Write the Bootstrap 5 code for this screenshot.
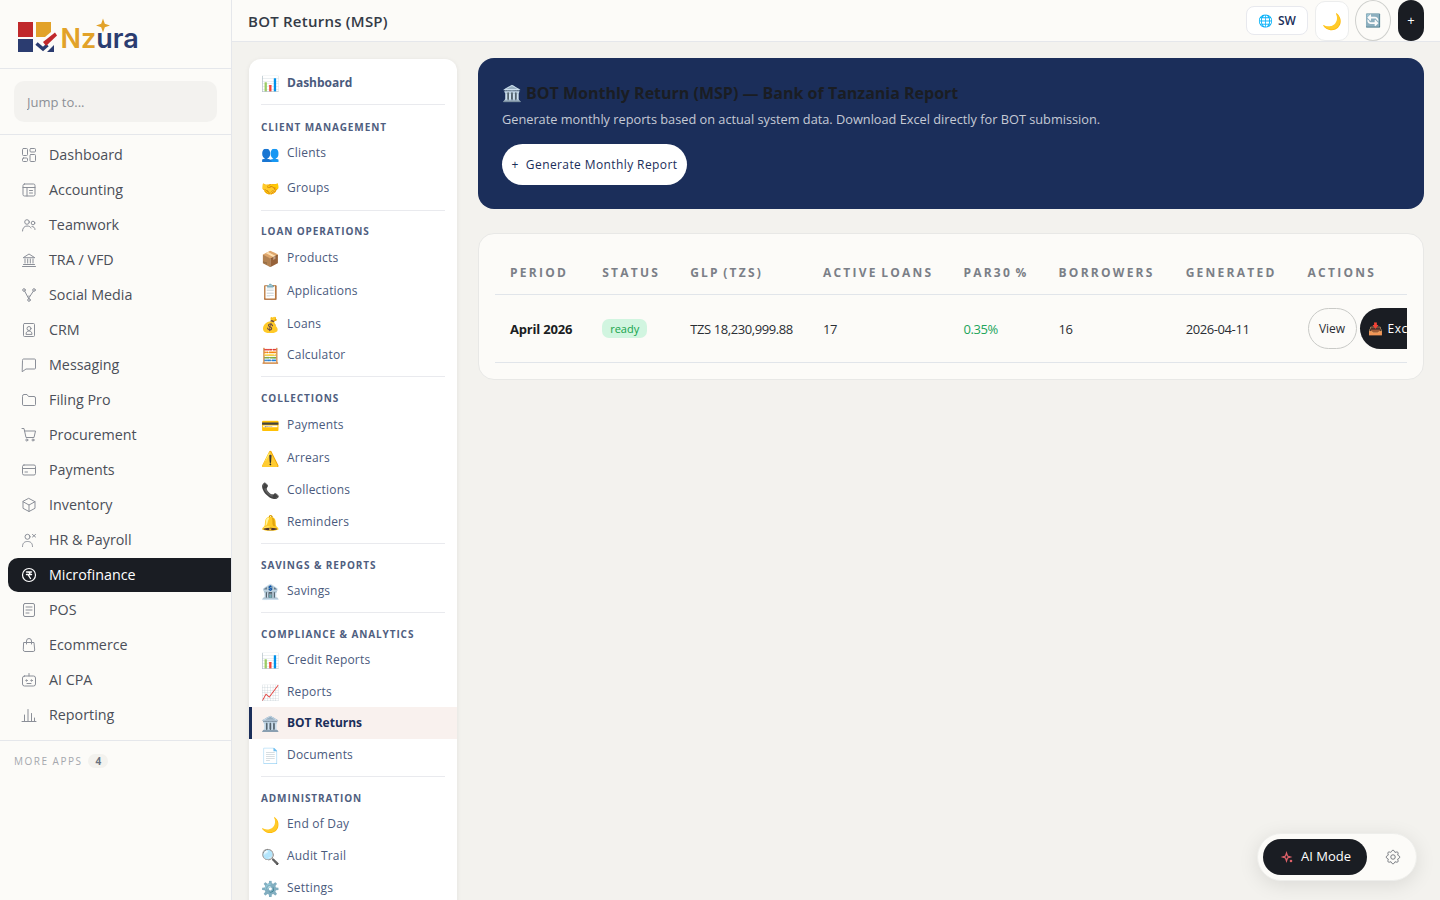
<!DOCTYPE html>
<html lang="en">
<head>
<meta charset="utf-8">
<title>BOT Returns (MSP)</title>
<link href="https://cdn.jsdelivr.net/npm/bootstrap@5.3.0/dist/css/bootstrap.min.css" rel="stylesheet">
<style>
html,body{height:100%;overflow:hidden}
body{font-family:"Open Sans","Noto Color Emoji",sans-serif;background:#f3f2ee;color:#1a1d23}
.side-pane{width:232px;height:900px;background:#fcfbf8;border-right:1px solid #e5e7eb;flex:none}
.logo-box{height:69px;border-bottom:1px solid #e5e7eb;padding:15px 0 0 17px}
.jump-box{height:66px;border-bottom:1px solid #e5e7eb;padding:12px 14px 12px 14px}
.jump-input{height:41px;width:203px;background:#f3f2ef;border:0;border-radius:10px;font-size:13px;padding:0 13px;color:#6b7280}
.jump-input::placeholder{color:#8b8f96}
.app-list{padding:3px 0 0 8px;display:flex;flex-direction:column;gap:1px}
.app-item{height:34px;display:flex;align-items:center;gap:12px;padding-left:13px;color:#4b4f58;font-size:14.3px;text-decoration:none;border-radius:10px 0 0 10px}
.app-item svg{width:16px;height:16px;flex:none;fill:none;stroke:#8b8f98;stroke-width:1;stroke-linecap:round;stroke-linejoin:round}
.app-on{background:#1a1d23;color:#fff}
.app-on svg{stroke:#fff}
.more-row{margin-top:8px;border-top:1px solid #e5e7eb;padding:13px 14px 0;display:flex;align-items:center;gap:6px;font-size:10px;letter-spacing:1.5px;color:#a5a8ae;line-height:14px}
.more-count{background:#f3f2ee;color:#6b7280;font-weight:700;border-radius:8px;width:20px;text-align:center;letter-spacing:0;font-size:10px}
.top-strip{height:42px;background:#fcfbf8;border-bottom:1px solid #e5e7eb;padding:0 16px}
.page-title{font-size:15px;font-weight:600;letter-spacing:.24px;color:#343a46;margin:0}
.lang-chip{width:62px;height:29px;border:1px solid #e8e9ee;border-radius:8px;background:#fff;font-size:12px;font-weight:600;color:#1b2e5a;padding:0;gap:5px;margin-right:7px}
.moon-chip{width:34px;height:40px;border:1px solid #eceded;border-radius:10px;background:#fff;font-size:16px;padding:0;margin-right:6px}
.sync-chip{width:36px;height:41px;border:1px solid #cfd0cd;border-radius:50%;background:transparent;font-size:13px;padding:0;margin-right:7px}
.plus-chip{width:26px;height:41px;border:0;border-radius:13px;background:#1a1d23;color:#fff;font-size:13px;padding:0}
.work-area{padding:16px 16px 0 17px;gap:21px}
.sub-pane{width:208px;flex:none;margin-top:1px;background:#fff;border-radius:12px;box-shadow:0 1px 5px rgba(0,0,0,.07);padding:8px 0;height:900px}
.sub-row{height:32px;display:flex;align-items:center;padding-left:12px;color:#4a5a7d;font-size:12px;letter-spacing:.2px;text-decoration:none}
.sub-row .emo{width:26px;flex:none;font-size:15px;line-height:1;letter-spacing:0}
.sub-head{font-weight:700;letter-spacing:0}
.sub-on{background:#f9f1ee;color:#1b2e5a;font-weight:700;letter-spacing:0;border-left:3px solid #1b2e5a;padding-left:9px}
.sub-rule{height:1px;background:#e9eaee;margin:5px 12px 0}
.rule-low{margin-top:6px}
.sub-label{padding:12.5px 12px 2.5px;font-size:10px;line-height:16px;font-weight:700;letter-spacing:.9px;color:#4f5e80}
.lab-down{padding-top:13.5px}
.lab-wide{padding-bottom:3.5px}
.lab-up{padding-top:11.5px;padding-bottom:3.5px}
.t1{margin-top:1px}.t3{margin-top:3px}.n1{margin-top:-1px}
.hero-band{background:#1b2e5a;border-radius:16px;padding:24px;height:151px}
.hero-title{font-size:16px;font-weight:700;line-height:23px;color:#1a1d23;margin:0 0 5px}
.hero-sub{font-size:12.75px;line-height:18px;color:rgba(255,255,255,.75);margin:0 0 16px}
.hero-btn{height:41px;width:185px;border-radius:21px;background:#fff;color:#1b2e5a;font-size:12px;font-weight:500;letter-spacing:.4px;padding:0;border:0}
.data-card{margin-top:24px;background:#fcfbf8;border:1px solid #e8e8e6;border-radius:16px;padding:16px;height:147px}
.data-clip{overflow:hidden;width:912px}
.data-grid{width:max-content;max-width:none;margin:0;--bs-table-bg:transparent;white-space:nowrap}
.data-grid th{font-size:12px;font-weight:700;letter-spacing:2.25px;word-spacing:-2px;color:#7b7f87;height:44px;padding:2px 15px 0;vertical-align:middle;border-bottom:1px solid #e1e5ea}
.data-grid th.th-wide{padding-right:16px}
.data-grid td{font-size:13px;letter-spacing:-.4px;color:#2b2e34;height:68px;padding:4px 15px 0;vertical-align:middle;border-bottom:1px solid #e1e5ea}
.data-grid td.period-cell{font-weight:700;color:#1a1d23;letter-spacing:-.2px}
.ready-pill{background:#d1f5e0;color:#16a34a;font-size:11px;font-weight:500;letter-spacing:0;padding:3px 8px;border-radius:7px;display:inline-block;line-height:13px}
.data-grid td.status-cell{padding-top:2px}
.data-grid td.par-cell{color:#22a55b}
.data-grid td.act-cell{padding-top:0;letter-spacing:0}
.view-btn{height:41px;width:49px;border:1px solid #c9cac7;border-radius:21px;background:transparent;color:#2b2e34;font-size:12px;padding:1px 0 0;margin-right:3px}
.excel-btn{height:41px;width:80px;border:0;border-radius:21px;background:#1a1d23;color:#fff;font-size:12px;letter-spacing:.5px;padding:1px 0 0 9px;text-align:left}
.ai-dock{position:fixed;left:1257px;top:833px;width:160px;height:48px;border-radius:24px;background:#fcfbf8;border:1px solid #eeeeeb;box-shadow:0 4px 20px rgba(0,0,0,.1);padding:5px;display:flex;align-items:center}
.ai-btn{width:104px;height:36px;border-radius:18px;background:#1a1d23;color:#fff;font-size:13px;border:0;padding:0;gap:8px}
.gear-ico{width:18px;height:18px;margin-left:17px;fill:none;stroke:#6b6e75;stroke-width:1.2}
</style>
</head>
<body class="d-flex">
<aside class="side-pane">
  <div class="logo-box">
    <svg width="125" height="40" viewBox="0 0 125 40" role="img" aria-label="Nzura logo">
      <rect x="1" y="7" width="15" height="15" fill="#c0282b"/>
      <path d="M19 7h15v10l-6 5H19z" fill="#e2a229"/>
      <path d="M1 24h15v13H1z" fill="#2b3c70"/>
      <path d="M19.500 28.500L26 34l4.500-4" fill="none" stroke="#2b3c70" stroke-width="3.500"/>
      <path d="M26 27l12-9.500 2 3L29 31z" fill="#c0282b"/>
      <path d="M30 37l7-7v7z" fill="#2b3c70"/>
      <text x="43.500" y="33" font-family="Inter,'Open Sans',sans-serif" font-size="27" font-weight="600" fill="#e2a229">Nz<tspan fill="#2b3c70">ura</tspan></text>
      <path d="M86 3.500l1.800 5.200L93 10.500l-5.200 1.800L86 17.500l-1.800-5.200L79 10.500l5.200-1.800z" fill="#e2a229"/>
    </svg>
  </div>
  <div class="jump-box"><input class="jump-input" placeholder="Jump to..." aria-label="Jump to"></div>
  <nav class="app-list">
    <a class="app-item" href="#"><svg viewBox="0 0 16 16"><rect x="1.500" y="1.500" width="5" height="7" rx="1"/><rect x="1.500" y="11" width="5" height="3.500" rx="1"/><rect x="9" y="1.500" width="5.500" height="3.500" rx="1"/><rect x="9" y="7.500" width="5.500" height="7" rx="1"/></svg>Dashboard</a>
    <a class="app-item" href="#"><svg viewBox="0 0 16 16"><rect x="2" y="2" width="12" height="12" rx="1.500"/><path d="M2 5.500h12M6 5.500V14M8.500 8.500h3M8.500 11h3"/></svg>Accounting</a>
    <a class="app-item" href="#"><svg viewBox="0 0 16 16"><circle cx="6" cy="5" r="2.300"/><circle cx="12" cy="6" r="1.800"/><path d="M1.500 14c0-3 2-5 4.500-5s3.500 1 4 2M11 9.500c1.500 0 3 1 3 3"/></svg>Teamwork</a>
    <a class="app-item" href="#"><svg viewBox="0 0 16 16"><path d="M1.500 14.500h13M2.500 12.500h11M2.500 5.500L8 2l5.500 3.500zM4 7v4M6.700 7v4M9.300 7v4M12 7v4"/></svg>TRA / VFD</a>
    <a class="app-item" href="#"><svg viewBox="0 0 16 16"><circle cx="3" cy="3" r="1.300"/><circle cx="13" cy="3" r="1.300"/><circle cx="8" cy="13" r="1.300"/><path d="M3.700 4.200l4 7.500M12.300 4.200L8.500 10M8 8.800L8 11.700"/></svg>Social Media</a>
    <a class="app-item" href="#"><svg viewBox="0 0 16 16"><rect x="2.500" y="1.500" width="11" height="13" rx="1"/><circle cx="8" cy="6.500" r="2"/><path d="M5 12c0-2 1.300-3 3-3s3 1 3 3z"/></svg>CRM</a>
    <a class="app-item" href="#"><svg viewBox="0 0 16 16"><path d="M1.500 3a1 1 0 011-1h11a1 1 0 011 1v8a1 1 0 01-1 1H5l-3.500 2.500z"/></svg>Messaging</a>
    <a class="app-item" href="#"><svg viewBox="0 0 16 16"><path d="M1.500 4a1.500 1.500 0 011.500-1.500h3l1.500 2H13A1.500 1.500 0 0114.500 6v6.500A1 1 0 0113.500 13.500h-11a1 1 0 01-1-1z"/></svg>Filing Pro</a>
    <a class="app-item" href="#"><svg viewBox="0 0 16 16"><path d="M1 1.500h2L5 10.500h8l1.500-6.500H3.700"/><circle cx="5.800" cy="13" r="1"/><circle cx="12" cy="13" r="1"/></svg>Procurement</a>
    <a class="app-item" href="#"><svg viewBox="0 0 16 16"><rect x="1.500" y="3" width="13" height="10" rx="1.500"/><path d="M1.500 6.500h13M4 10h2.500"/></svg>Payments</a>
    <a class="app-item" href="#"><svg viewBox="0 0 16 16"><path d="M8 1.500l6 3.200v6.600l-6 3.200-6-3.200V4.700zM2 4.700l6 3.300 6-3.300M8 8v6.500"/></svg>Inventory</a>
    <a class="app-item" href="#"><svg viewBox="0 0 16 16"><circle cx="6.500" cy="4.800" r="2.500"/><path d="M1.500 14.500c0-3.500 2-5 5-5s5 1.500 5 5M11.500 2.500l3 2.500M14.500 2.500l-3 2.500"/></svg>HR &amp; Payroll</a>
    <a class="app-item app-on" href="#"><svg viewBox="0 0 16 16"><circle cx="8" cy="8" r="6.500" stroke-width="1.200"/><path d="M5.500 5h5M5.500 7.500h5M7 5c2.500 0 2.500 2.500 0 2.500L9.500 11.500" stroke-width="1.400"/></svg>Microfinance</a>
    <a class="app-item" href="#"><svg viewBox="0 0 16 16"><rect x="2.500" y="1.500" width="11" height="13" rx="1.500"/><path d="M5 5h6M5 8h6M5 11h3"/></svg>POS</a>
    <a class="app-item" href="#"><svg viewBox="0 0 16 16"><path d="M3 5.500h10l.7 7.500a1.500 1.500 0 01-1.500 1.500H3.800A1.500 1.500 0 012.300 13zM5.500 7V4a2.500 2.500 0 015 0v3"/></svg>Ecommerce</a>
    <a class="app-item" href="#"><svg viewBox="0 0 16 16"><rect x="1.500" y="4" width="13" height="10" rx="2"/><path d="M8 4V1.500"/><circle cx="5.500" cy="8.500" r=".7"/><circle cx="10.500" cy="8.500" r=".7"/><path d="M6 11.500h4"/></svg>AI CPA</a>
    <a class="app-item" href="#"><svg viewBox="0 0 16 16"><path d="M1 14.500h14M3.500 14V8M7 14V2.500M10.500 14V6.500M13.500 14v-3"/></svg>Reporting</a>
  </nav>
  <div class="more-row"><span>MORE APPS</span><span class="more-count">4</span></div>
</aside>
<div class="flex-grow-1 d-flex flex-column" style="min-width:0">
  <header class="top-strip d-flex align-items-center">
    <h1 class="page-title me-auto">BOT Returns (MSP)</h1>
    <button class="btn lang-chip d-inline-flex align-items-center justify-content-center"><span>🌐</span><span>SW</span></button>
    <button class="btn moon-chip">🌙</button>
    <button class="btn sync-chip">🔄</button>
    <button class="btn plus-chip">+</button>
  </header>
  <div class="work-area d-flex">
    <nav class="sub-pane">
      <a class="sub-row sub-head" href="#"><span class="emo">📊</span>Dashboard</a>
      <div class="sub-rule"></div>
      <div class="sub-label lab-down">CLIENT MANAGEMENT</div>
      <a class="sub-row" href="#"><span class="emo">👥</span>Clients</a>
      <a class="sub-row t3" href="#"><span class="emo">🤝</span>Groups</a>
      <div class="sub-rule rule-low"></div>
      <div class="sub-label lab-up">LOAN OPERATIONS</div>
      <a class="sub-row" href="#"><span class="emo">📦</span>Products</a>
      <a class="sub-row t1" href="#"><span class="emo">📋</span>Applications</a>
      <a class="sub-row t1" href="#"><span class="emo">💰</span>Loans</a>
      <a class="sub-row n1" href="#"><span class="emo">🧮</span>Calculator</a>
      <div class="sub-rule"></div>
      <div class="sub-label lab-wide">COLLECTIONS</div>
      <a class="sub-row" href="#"><span class="emo">💳</span>Payments</a>
      <a class="sub-row t1" href="#"><span class="emo">⚠️</span>Arrears</a>
      <a class="sub-row" href="#"><span class="emo">📞</span>Collections</a>
      <a class="sub-row" href="#"><span class="emo">🔔</span>Reminders</a>
      <div class="sub-rule"></div>
      <div class="sub-label">SAVINGS &amp; REPORTS</div>
      <a class="sub-row" href="#"><span class="emo">🏦</span>Savings</a>
      <div class="sub-rule"></div>
      <div class="sub-label">COMPLIANCE &amp; ANALYTICS</div>
      <a class="sub-row" href="#"><span class="emo">📊</span>Credit Reports</a>
      <a class="sub-row" href="#"><span class="emo">📈</span>Reports</a>
      <a class="sub-row sub-on n1" href="#"><span class="emo">🏛️</span>BOT Returns</a>
      <a class="sub-row" href="#"><span class="emo">📄</span>Documents</a>
      <div class="sub-rule"></div>
      <div class="sub-label">ADMINISTRATION</div>
      <a class="sub-row" href="#"><span class="emo">🌙</span>End of Day</a>
      <a class="sub-row" href="#"><span class="emo">🔍</span>Audit Trail</a>
      <a class="sub-row" href="#"><span class="emo">⚙️</span>Settings</a>
    </nav>
    <main class="flex-grow-1" style="min-width:0">
      <section class="hero-band">
        <h2 class="hero-title">🏛️ BOT Monthly Return (MSP) — Bank of Tanzania Report</h2>
        <p class="hero-sub">Generate monthly reports based on actual system data. Download Excel directly for BOT submission.</p>
        <button class="btn hero-btn">+&nbsp; Generate Monthly Report</button>
      </section>
      <section class="data-card">
        <div class="data-clip">
          <table class="table data-grid">
            <thead><tr><th>PERIOD</th><th>STATUS</th><th>GLP (TZS)</th><th>ACTIVE LOANS</th><th>PAR30 %</th><th class="th-wide">BORROWERS</th><th class="th-wide">GENERATED</th><th>ACTIONS</th></tr></thead>
            <tbody><tr>
              <td class="period-cell">April 2026</td>
              <td class="status-cell"><span class="ready-pill">ready</span></td>
              <td>TZS 18,230,999.88</td>
              <td>17</td>
              <td class="par-cell">0.35%</td>
              <td>16</td>
              <td>2026-04-11</td>
              <td class="act-cell"><button class="btn view-btn">View</button><button class="btn excel-btn">📥 Excel</button></td>
            </tr></tbody>
          </table>
        </div>
      </section>
    </main>
  </div>
</div>
<div class="ai-dock">
  <button class="btn ai-btn d-flex align-items-center justify-content-center">
    <svg width="14" height="14" viewBox="0 0 14 14"><path d="M7.500 3l1 3 3 1-3 1-1 3-1-3-3-1 3-1z" fill="none" stroke="#e0626a" stroke-width="1.200"/><circle cx="12" cy="11" r="1.300" fill="#e0626a"/></svg>AI Mode</button>
  <svg class="gear-ico" viewBox="0 0 24 24"><circle cx="12" cy="12" r="3"/><path d="M10.300 4.300c.4-1.800 3-1.800 3.400 0a1.700 1.700 0 002.600 1.100c1.500-.9 3.300.8 2.400 2.400a1.700 1.700 0 001 2.600c1.800.4 1.800 3 0 3.400a1.700 1.700 0 00-1 2.600c.9 1.500-.9 3.300-2.400 2.400a1.700 1.700 0 00-2.600 1c-.4 1.800-3 1.800-3.400 0a1.700 1.700 0 00-2.600-1c-1.500.9-3.300-.9-2.400-2.400a1.700 1.700 0 00-1-2.600c-1.800-.4-1.800-3 0-3.400a1.700 1.700 0 001-2.600c-.9-1.600.9-3.300 2.400-2.400 1 .6 2.300.1 2.600-1.100z"/></svg>
</div>
<script src="https://cdn.jsdelivr.net/npm/bootstrap@5.3.0/dist/js/bootstrap.bundle.min.js"></script>
</body>
</html>
